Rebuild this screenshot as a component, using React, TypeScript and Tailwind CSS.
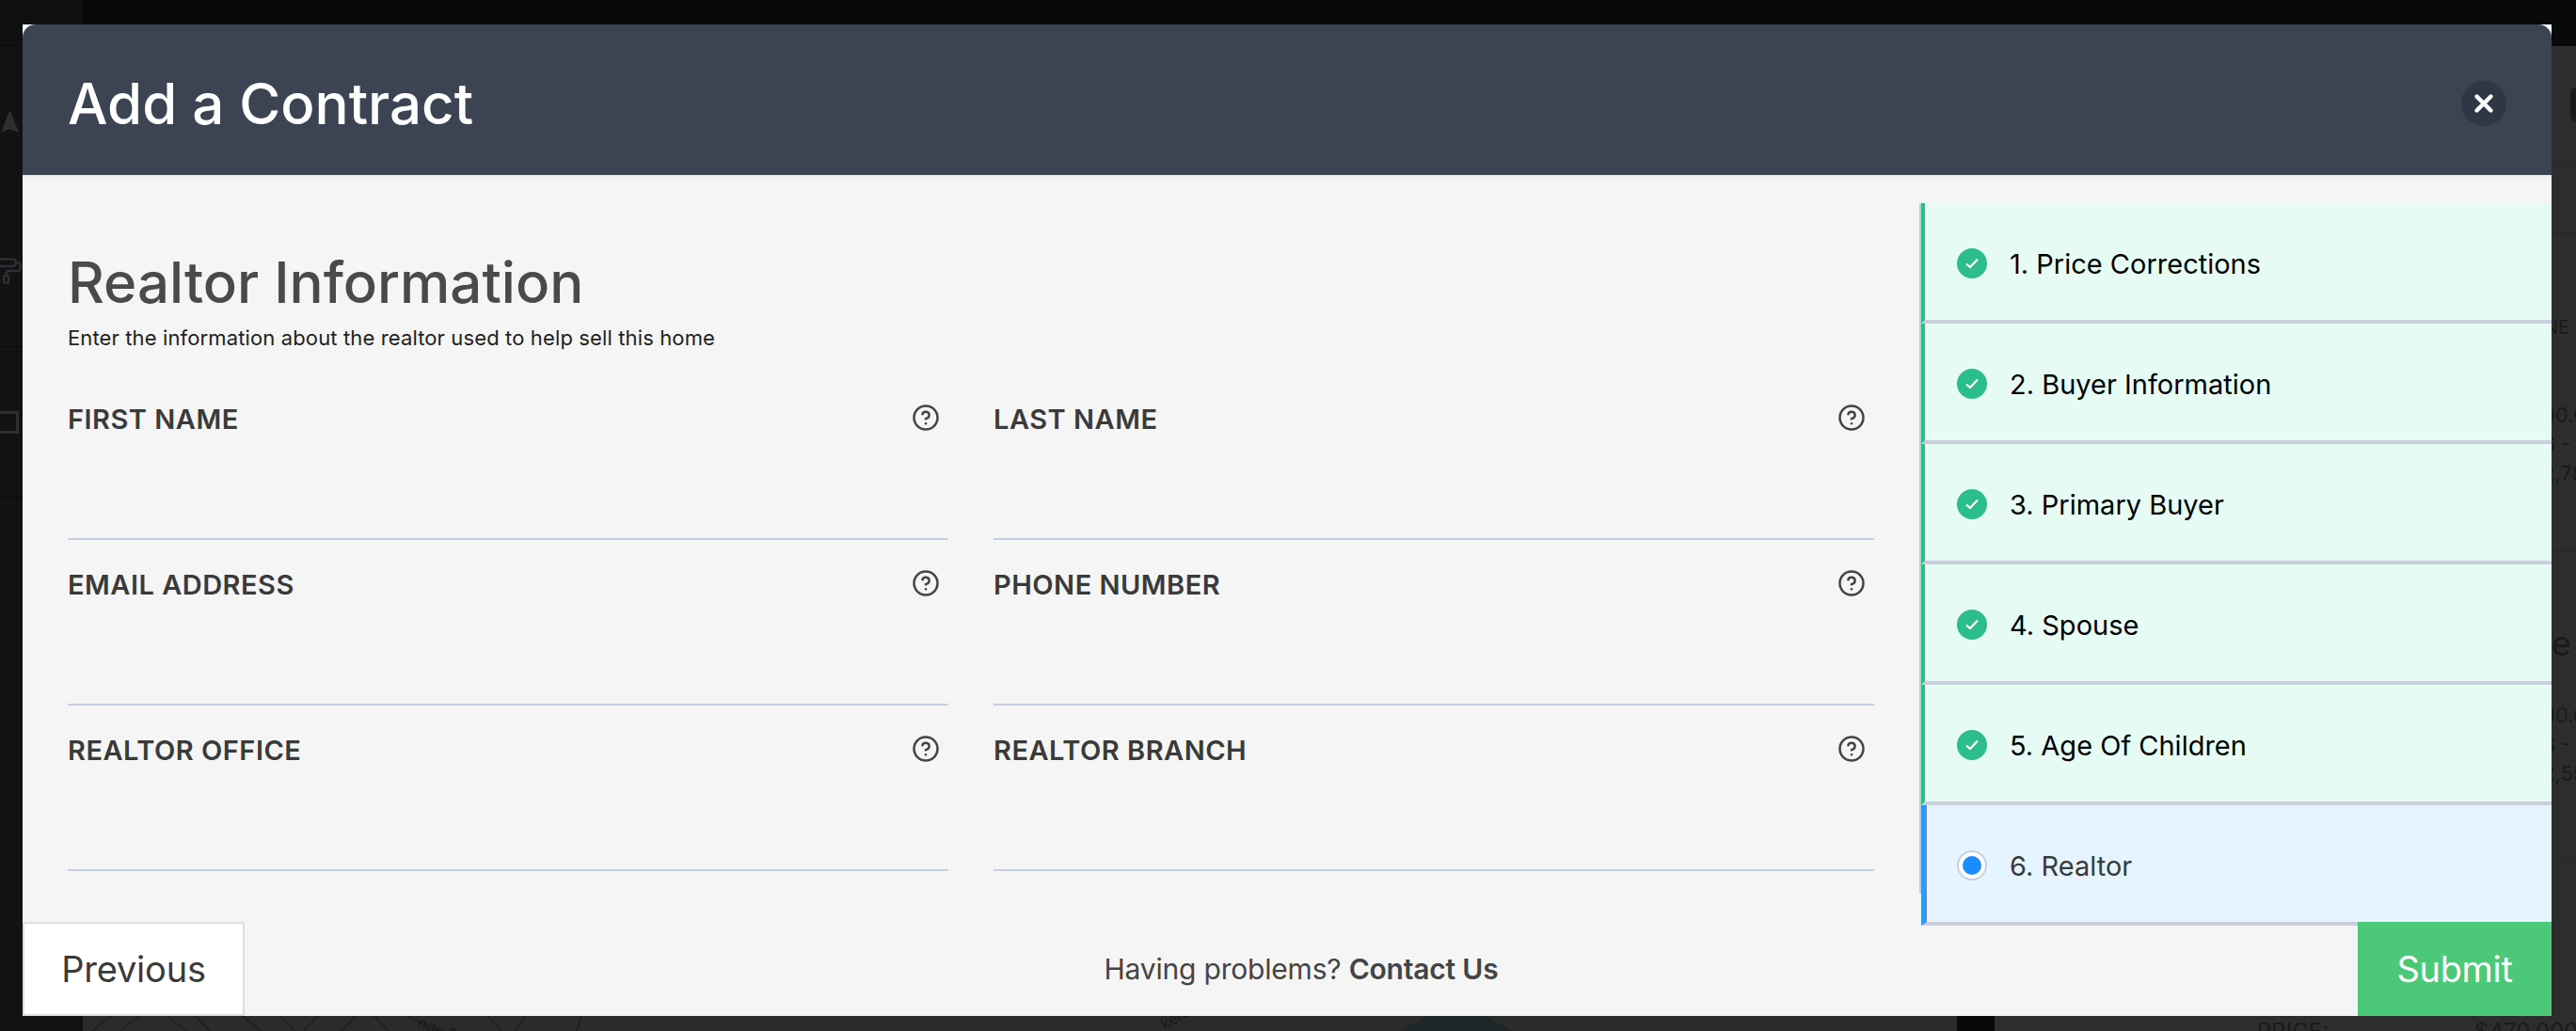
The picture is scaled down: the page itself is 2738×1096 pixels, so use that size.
import React from "react"
import { CircleHelp, PaintRoller, X } from "lucide-react"

const fields = [
    "FIRST NAME",
    "LAST NAME",
    "EMAIL ADDRESS",
    "PHONE NUMBER",
    "REALTOR OFFICE",
    "REALTOR BRANCH",
]

const steps = [
    "1. Price Corrections",
    "2. Buyer Information",
    "3. Primary Buyer",
    "4. Spouse",
    "5. Age Of Children",
]

const Field = ({ label }: { label: string }) => (
    <div className="h-[176px] border-b-2 border-[#c5cfe3] flex items-start justify-between pt-[30px] pr-[9px]">
        <span className="text-[29px] leading-[36px] font-semibold text-[#3a3a3a] tracking-[0.5px]">
            {label}
        </span>
        <CircleHelp size={30} strokeWidth={2} className="text-[#444444] mt-[1px]" />
    </div>
)

const DoneStep = ({ label }: { label: string }) => (
    <div className="h-[128px] shrink-0 flex items-center bg-[#e5fbf3] border-l-4 border-b-4 border-l-[#2bbd8a] border-b-[#c9cfdc] pl-[34px] pt-[4px]">
        <span className="w-8 h-8 rounded-full bg-[#2bbd8a] flex items-center justify-center">
            <svg width="16" height="14" viewBox="0 0 16 14" fill="none">
                <path d="M2 7.5 L6 11 L14 2.5" stroke="#ffffff" strokeWidth="2.2" />
            </svg>
        </span>
        <span className="ml-[24px] text-[29px] leading-none text-black">{label}</span>
    </div>
)

const Background = () => (
    <div className="w-[2738px] h-[1096px] flex flex-col bg-[#08090a] overflow-hidden">
        <div className="h-[49px] shrink-0 flex">
            <div className="w-[88px] bg-[#0e1012] border-b border-[#08090a]" />
        </div>
        <div className="flex-1 flex min-h-0">
            {/* left rail */}
            <div className="w-[88px] bg-[#101214] flex flex-col text-[#2e2f31]">
                <div className="h-[320px] border-b border-[#08090a] pt-[68px]">
                    <svg width="20" height="24" viewBox="0 0 20 24" className="ml-[1px]">
                        <path d="M9.5 0 L19 24 L9.5 20 L0 24 Z" fill="#2e2f31" />
                    </svg>
                    <PaintRoller size={30} className="-ml-[6px] mt-[132px]" />
                </div>
                <div className="h-[160px] border-b border-[#08090a] pt-[68px]">
                    <div className="w-5 h-6 border-[3px] border-l-0 border-[#2e2f31]" />
                </div>
            </div>
            {/* map */}
            <div className="w-[1992px] bg-[#2b2b2b] flex flex-col justify-end">
                <svg width="1992" height="16" viewBox="0 0 1992 16" fill="none" stroke="#1f1f1f" strokeWidth="1.5">
                    <path d="M30 0 L10 16 M60 0 L40 16 M90 0 L110 16 M120 0 L135 16 M170 0 L190 16 M210 0 L225 16 M250 0 L235 16 M290 0 L275 16 M310 0 L325 16 M345 0 L375 16 M430 0 L445 16 M470 0 L460 16 M530 0 L525 16" />
                    <path d="M1430 0 L1400 16 L1520 16 L1490 0 Z" fill="#1d2629" stroke="none" />
                    <text x="355" y="12" fill="#1a1a1a" stroke="none" fontSize="16" fontFamily="Inter, sans-serif" transform="rotate(20 355 12)">
                        nde D
                    </text>
                    <text x="1150" y="15" fill="#1a1a1a" stroke="none" fontSize="16" fontFamily="Inter, sans-serif" transform="rotate(-30 1150 15)">
                        kers Way
                    </text>
                </svg>
            </div>
            <div className="w-[40px] bg-[#08090a]" />
            {/* listing panel behind the modal */}
            <div className="w-[618px] bg-[#2d2d2d] flex flex-col text-[#1b1b1b] font-['Inter',sans-serif] text-[22px] leading-[22px] whitespace-nowrap">
                <div className="h-[125px] shrink-0 border-b border-[#262626] pl-[612px] pt-[44px]">
                    <div className="w-10 h-9 rounded-md bg-[#1a1a1a]" />
                </div>
                <div className="h-[75px] shrink-0 border-b border-[#262626]" />
                <div className="h-[337px] shrink-0 border-b border-[#262626] pl-[582px] pt-[88px] flex flex-col">
                    <span className="text-[20px] pl-[2px]">NE</span>
                    <span className="mt-[71px]">00.00</span>
                    <span className="mt-[9px]">$ - 3.5</span>
                    <span className="mt-[9px]">2,78</span>
                </div>
                <div className="h-[327px] shrink-0 border-b border-[#262626] pl-[592px] pt-[80px] flex flex-col">
                    <span className="text-[36px] leading-[36px]">e</span>
                    <span className="mt-[47px] -ml-[10px]">00.00</span>
                    <span className="mt-[9px] -ml-[10px]">$ - 2.5</span>
                    <span className="mt-[9px] -ml-[10px]">2,55</span>
                </div>
                <div className="flex pt-[172px] pl-[279px] text-[24px] leading-[24px]">
                    <span>PRICE:</span>
                    <span className="ml-[155px]">$470,000.00</span>
                </div>
            </div>
        </div>
    </div>
)

const App = () => {
    return (
        <div className="relative w-[2738px] h-[1096px] overflow-hidden font-['Inter',sans-serif]">
            <Background />

            <div className="absolute left-[24px] top-[26px] w-[2688px] h-[1054px] bg-white flex flex-col">
                <div className="h-[160px] shrink-0 rounded-t-[14px] bg-[#3c4353] flex items-center justify-between pl-[48px] pr-[48px] pt-[8px]">
                    <h1 className="text-[60px] leading-none font-medium text-white">Add a Contract</h1>
                    <button className="w-12 h-12 rounded-full bg-[#2f3644] flex items-center justify-center text-white">
                        <X size={30} strokeWidth={3.5} />
                    </button>
                </div>

                <div className="h-[894px] shrink-0 bg-[#f5f5f5] flex shadow-[inset_0_3px_3px_-2px_rgba(0,0,0,0.08)]">
                    <div className="w-[2016px] shrink-0 pl-[48px] pr-[48px] pt-[76px]">
                        <h2 className="text-[60px] leading-[76px] font-medium text-[#4a4a4a]">
                            Realtor Information
                        </h2>
                        <p className="mt-[6px] text-[22px] leading-[30px] text-[#222222] tracking-[0.13px]">
                            Enter the information about the realtor used to help sell this home
                        </p>
                        <div className="grid grid-cols-2 gap-x-12 mt-[24px]">
                            {fields.map((f) => (
                                <Field key={f} label={f} />
                            ))}
                        </div>
                    </div>
                    <div className="flex-1 mt-[30px]">
                        <div className="flex flex-col border-l-2 border-[#c8c8c8] h-[734px]">
                            {steps.map((s) => (
                                <DoneStep key={s} label={s} />
                            ))}
                            <div className="h-[128px] shrink-0 flex items-center bg-[#e5f4ff] border-l-[6px] border-b-4 border-l-[#3299ee] border-b-[#c9cfdc] pl-[32px] pt-[4px]">
                                <span className="w-8 h-8 rounded-full bg-white border-2 border-[#c9cfe3] flex items-center justify-center">
                                    <span className="w-5 h-5 rounded-full bg-[#1a8cff]" />
                                </span>
                                <span className="ml-[24px] text-[29px] leading-none text-[#3a3a3a]">6. Realtor</span>
                            </div>
                        </div>
                    </div>
                </div>

                <div className="relative h-[100px] -mt-[100px] shrink-0 flex items-stretch justify-between">
                    <button className="w-[236px] bg-white border-2 border-[#dddddd] text-[38px] text-[#3a3a3a] tracking-[-0.2px]">
                        Previous
                    </button>
                    <p className="self-center text-[30px] text-[#444444] tracking-[-0.2px]">
                        Having problems? <span className="font-semibold">Contact Us</span>
                    </p>
                    <button className="w-[206px] bg-[#4cc879] text-[38px] text-white tracking-[-0.3px]">Submit</button>
                </div>
            </div>
        </div>
    )
}

export default App
